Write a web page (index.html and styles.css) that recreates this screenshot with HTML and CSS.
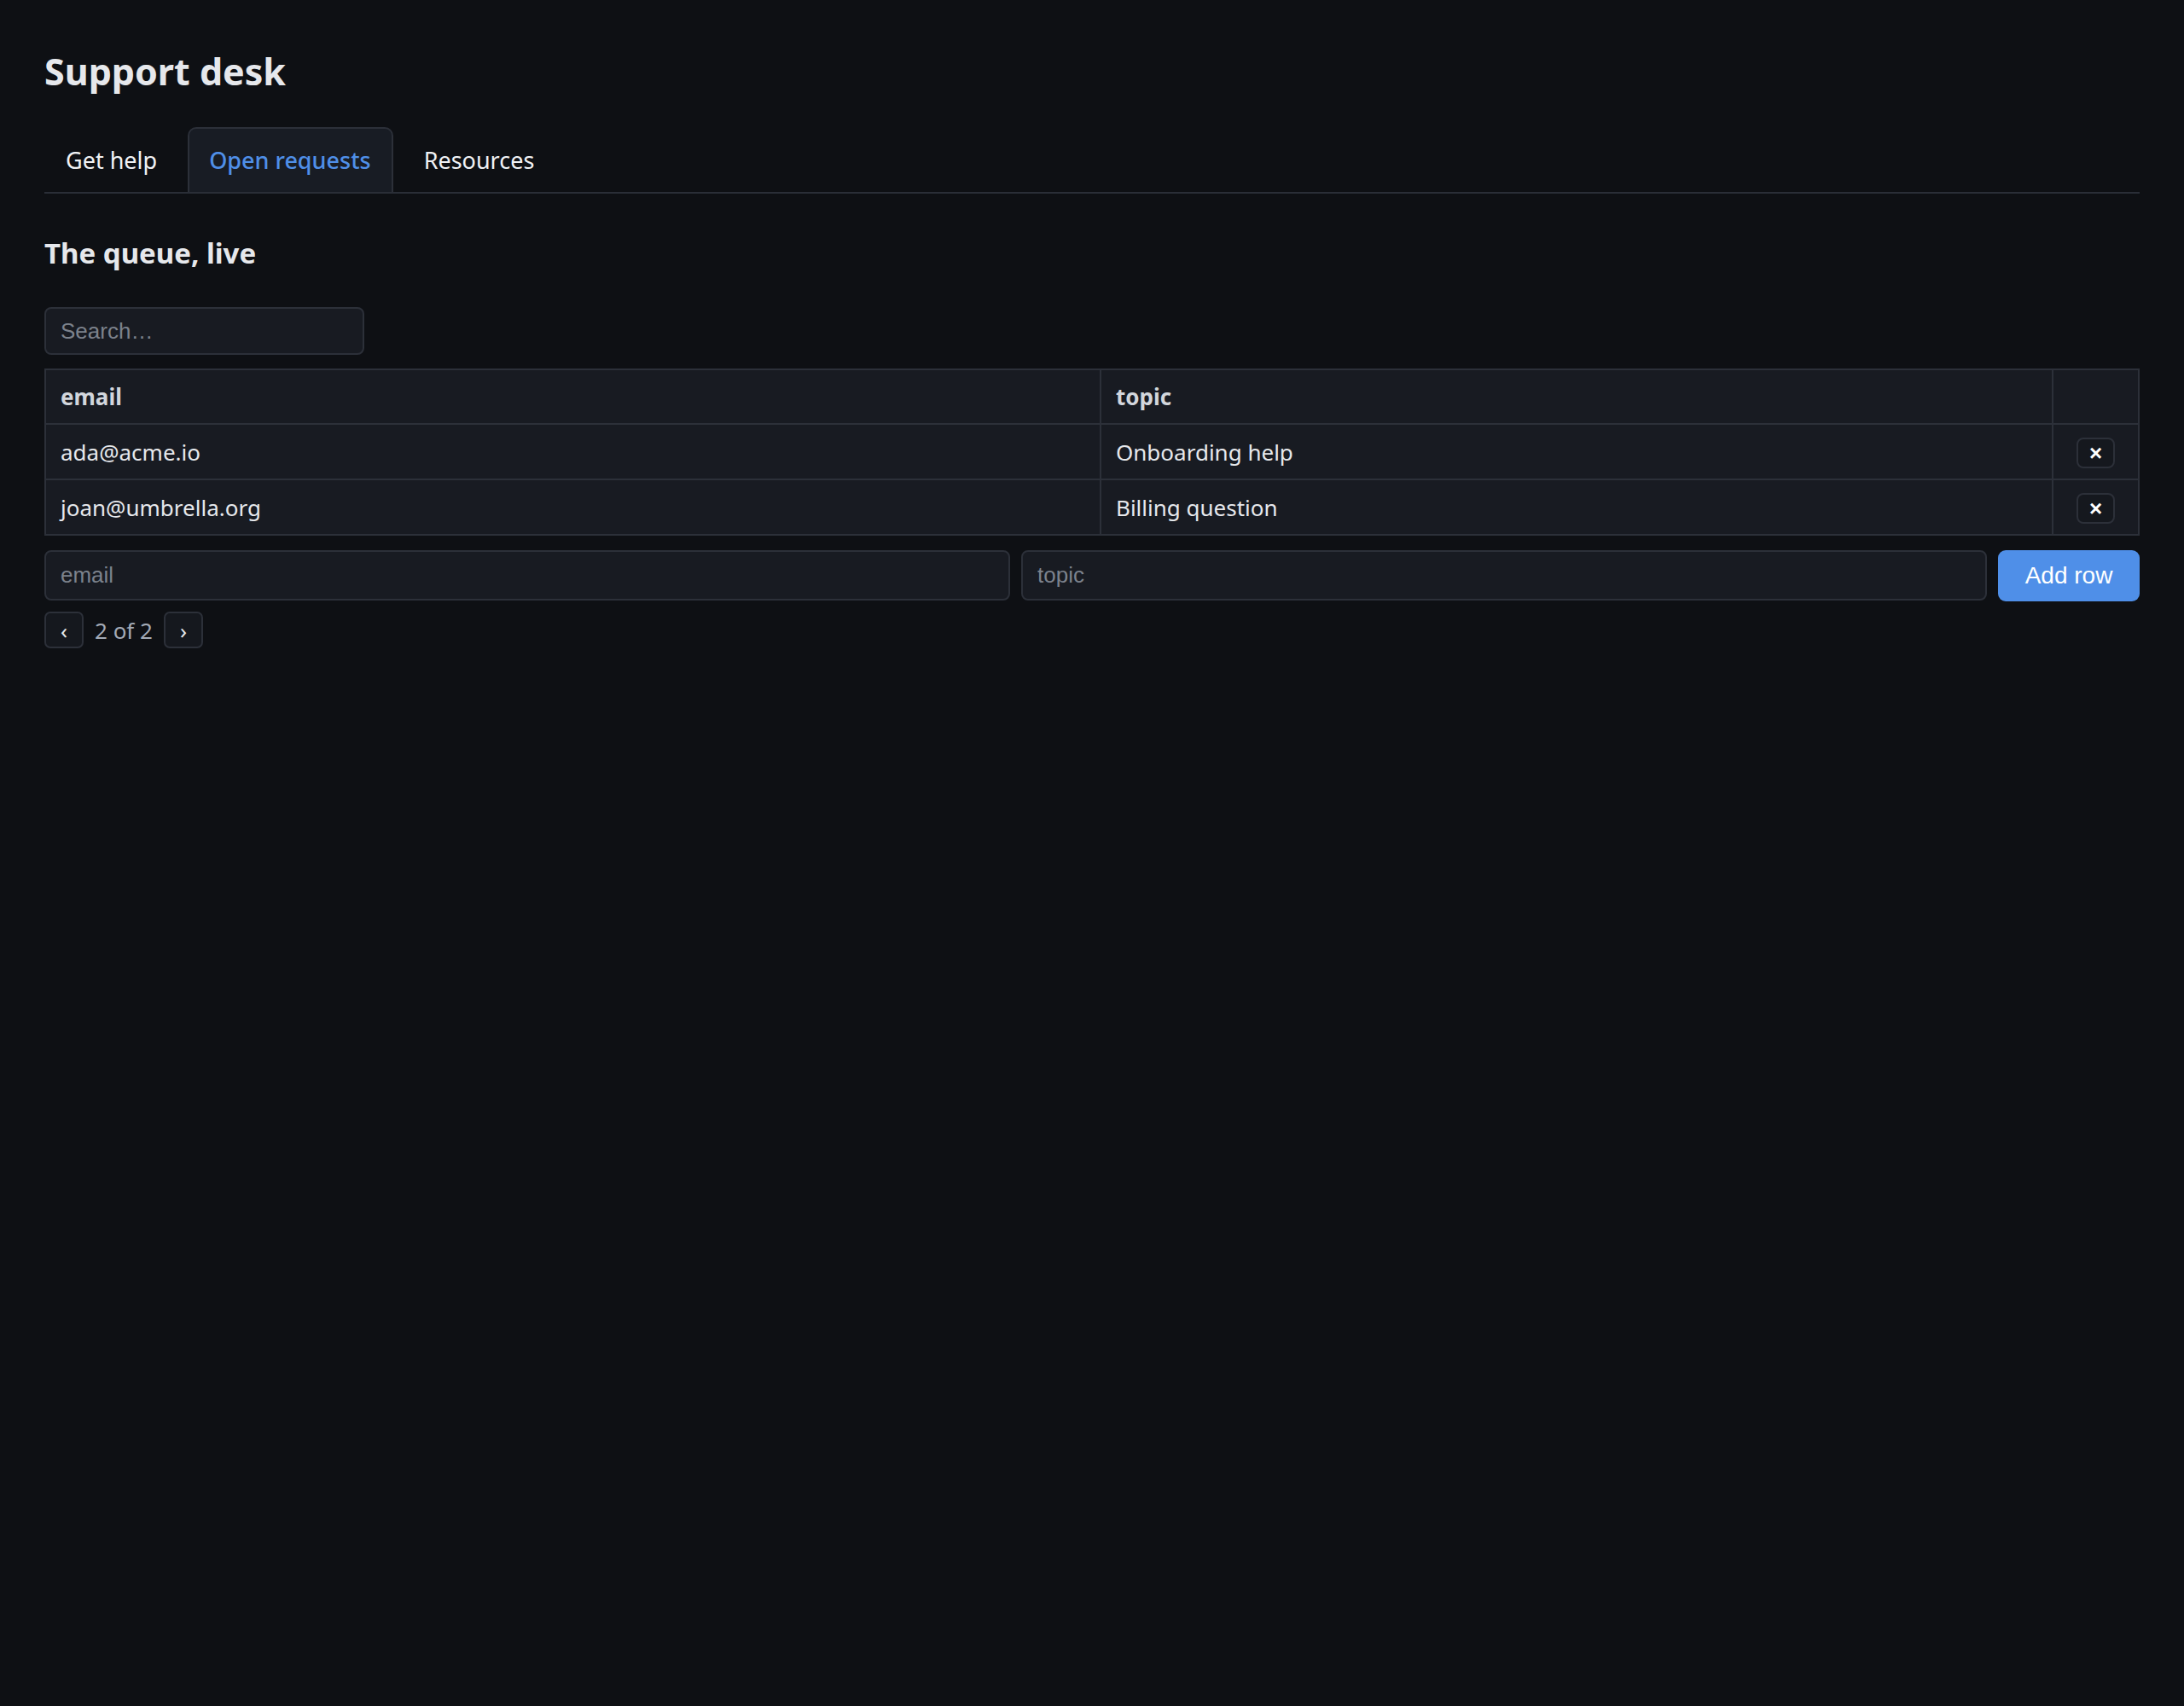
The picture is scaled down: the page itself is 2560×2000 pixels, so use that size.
FILE: index.html
```html
<!DOCTYPE html>
<html lang="en">
<head>
  <meta charset="UTF-8" />
  <title>Support desk</title>
  <link rel="stylesheet" href="styles.css">
</head>
<body>

  <h1>Support desk</h1>

  <!-- Tabs -->
  <div class="tabs">
    <div class="tab">Get help</div>
    <div class="tab active">Open requests</div>
    <div class="tab">Resources</div>
  </div>

  <h2>The queue, live</h2>

  <input class="search" type="text" placeholder="Search…" />

  <table class="grid">
    <colgroup>
      <col class="col-email" />
      <col class="col-topic" />
      <col class="col-action" />
    </colgroup>
    <thead>
      <tr><th>email</th><th>topic</th><th></th></tr>
    </thead>
    <tbody>
      <tr>
        <td>ada@acme.io</td>
        <td>Onboarding help</td>
        <td class="action"><button class="del">×</button></td>
      </tr>
      <tr>
        <td>joan@umbrella.org</td>
        <td>Billing question</td>
        <td class="action"><button class="del">×</button></td>
      </tr>
    </tbody>
  </table>

  <!-- Add row form -->
  <div class="add-form">
    <input type="text" placeholder="email" />
    <input type="text" placeholder="topic" />
    <button class="add">Add row</button>
  </div>

  <div class="pager">
    <button class="page-btn">‹</button>
    <span class="page-info">2 of 2</span>
    <button class="page-btn">›</button>
  </div>

</body>
</html>
```

FILE: styles.css
```css
* { margin: 0; padding: 0; box-sizing: border-box; }

body {
  font-family: "Noto Sans", "Open Sans", sans-serif;
  background: #0e1014;
  color: #e6e8ec;
  padding: 58px 52px 44px;
}

h1 {
  font-size: 43px;
  font-weight: 700;
  line-height: 1.2;
  margin-bottom: 39px;
}

.tabs {
  display: flex;
  gap: 11px;
  border-bottom: 2px solid #2a2e37;
}

.tab {
  font-size: 27px;
  padding: 19px 23px 19px;
  line-height: 36px;
  border: 2px solid transparent;
  border-bottom: none;
  border-radius: 10px 10px 0 0;
  color: #f0f2f5;
}

.tab.active {
  background: #181c24;
  border-color: #2c3039;
  color: #4f8fe8;
  font-weight: 500;
  padding: 19px 24px 19px 23px;
}

h2 {
  font-size: 33px;
  font-weight: 700;
  margin: 50px 0 44px;
  line-height: 1.2;
}

input {
  font-family: "Liberation Sans", Arial, sans-serif;
  font-size: 26px;
  background: #181b22;
  color: #e6e8ec;
  border: 2px solid #2c3039;
  border-radius: 8px;
  padding: 0 17px;
  outline: none;
}

input::placeholder { color: #7c828c; }

.search {
  width: 375px;
  height: 56px;
  display: block;
  margin-bottom: 16px;
}

.grid {
  width: 100%;
  border-collapse: collapse;
  background: #181b22;
  font-size: 26px;
}

.col-email { width: 1237px; }
.col-action { width: 101px; }

.grid th, .grid td {
  border: 2px solid #2c3039;
  padding: 0 17px;
  height: 65px;
  text-align: left;
}

.grid th {
  font-weight: 700;
  color: #d2d6dc;
  height: 64px;
}

.grid td.action { text-align: center; padding: 0; }

.del {
  width: 45px;
  height: 36px;
  background: #15181e;
  border: 2px solid #2c3039;
  border-radius: 8px;
  color: #fff;
  font-family: "Liberation Sans", Arial, sans-serif;
  font-size: 26px;
  font-weight: 700;
  line-height: 1;
  vertical-align: middle;
}

.add-form {
  display: flex;
  gap: 13px;
  margin-top: 17px;
}

.add-form input {
  flex: 1;
  height: 59px;
}

.add {
  width: 166px;
  height: 60px;
  background: #4f8fe8;
  color: #fff;
  border: none;
  border-radius: 9px;
  font-family: "Liberation Sans", Arial, sans-serif;
  font-size: 28px;
}

.pager {
  display: flex;
  align-items: center;
  gap: 13px;
  margin-top: 12px;
}

.page-btn {
  width: 46px;
  height: 43px;
  background: #15181e;
  border: 2px solid #2c3039;
  border-radius: 7px;
  color: #e6e8ec;
  font-family: "Noto Sans", sans-serif;
  font-size: 26px;
  line-height: 1;
}

.page-info {
  font-size: 26px;
  color: #a3aab6;
}
```
